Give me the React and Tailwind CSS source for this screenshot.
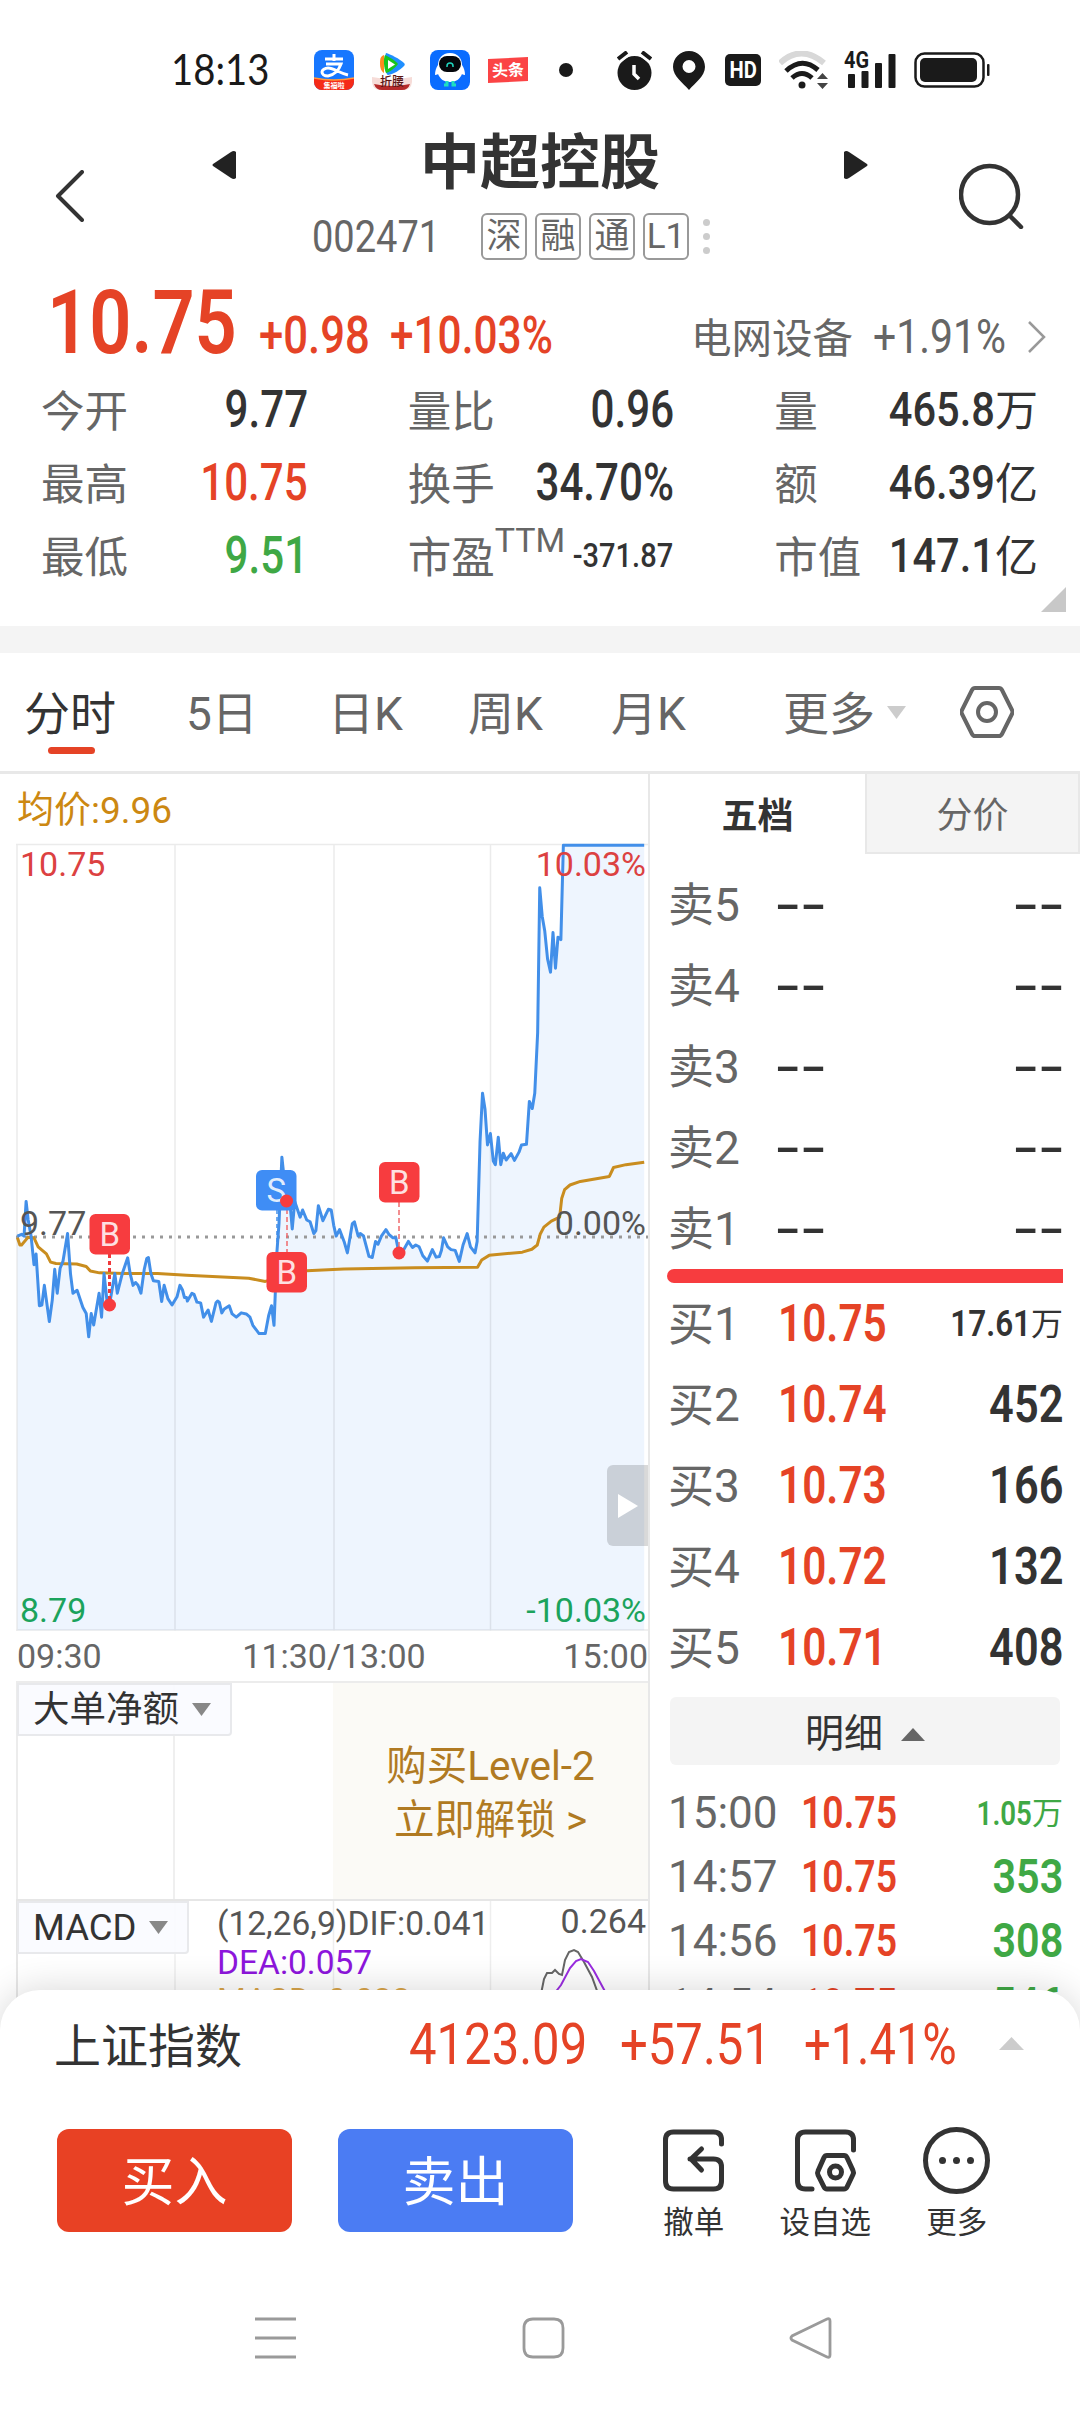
import React from 'react';
import clsx from 'clsx';

const RED = 'text-[#e54326]';
const GREEN = 'text-[#3fa845]';
const DARK = 'text-[#333]';

const quoteStats = [
  { label: '今开', value: '9.77', color: DARK },
  { label: '量比', value: '0.96', color: DARK },
  { label: '量', value: '465.8', unit: '万', color: DARK },
  { label: '最高', value: '10.75', color: RED },
  { label: '换手', value: '34.70%', color: DARK },
  { label: '额', value: '46.39', unit: '亿', color: DARK },
  { label: '最低', value: '9.51', color: GREEN },
  { label: '市盈', sup: 'TTM', value: '-371.87', color: DARK, small: true },
  { label: '市值', value: '147.1', unit: '亿', color: DARK },
];

const asks = ['卖5', '卖4', '卖3', '卖2', '卖1'];

const bids = [
  { label: '买1', price: '10.75', volume: '17.61', unit: '万' },
  { label: '买2', price: '10.74', volume: '452' },
  { label: '买3', price: '10.73', volume: '166' },
  { label: '买4', price: '10.72', volume: '132' },
  { label: '买5', price: '10.71', volume: '408' },
];

const trades = [
  { time: '15:00', price: '10.75', volume: '1.05', unit: '万' },
  { time: '14:57', price: '10.75', volume: '353' },
  { time: '14:56', price: '10.75', volume: '308' },
  { time: '14:54', price: '10.75', volume: '546' },
];

const PRICE_LINE =
  '42,1165 52,1160 58,1165 63,1068 68,1120 75,1165 82,1245 87,1215 95,1360 101,1358 107,1303 119,1404 126,1345 132,1258 138,1325 145,1255 152,1235 163,1158 170,1270 176,1325 186,1317 200,1365 208,1382 214,1447 220,1382 226,1414 239,1325 245,1392 251,1270 258,1345 264,1358 277,1270 283,1325 295,1270 308,1226 314,1270 321,1303 327,1295 333,1303 340,1325 348,1258 354,1228 358,1225 364,1270 370,1290 383,1292 390,1348 396,1303 405,1340 415,1358 427,1335 434,1303 440,1315 445,1337 450,1337 452,1347 463,1325 468,1328 475,1350 484,1352 491,1392 502,1372 510,1404 521,1352 525,1347 529,1350 535,1380 541,1369 553,1360 560,1383 570,1392 582,1380 594,1383 603,1392 610,1415 625,1438 640,1438 648,1388 655,1360 661,1415 668,1210 673,1130 680,944 686,1010 691,1067 700,1080 705,1145 711,1068 724,1112 730,1092 740,1120 748,1125 757,1158 762,1150 768,1080 779,1122 792,1090 799,1092 805,1135 811,1165 819,1147 830,1180 838,1212 850,1130 855,1125 864,1165 869,1158 877,1165 890,1222 898,1225 906,1180 912,1188 920,1165 931,1147 938,1160 948,1170 955,1170 962,1210 968,1215 985,1180 995,1197 1003,1190 1011,1195 1020,1220 1031,1235 1043,1203 1052,1224 1060,1222 1065,1205 1070,1170 1080,1195 1088,1203 1098,1205 1108,1236 1117,1190 1127,1158 1135,1195 1146,1212 1151,1180 1158,900 1164,765 1170,810 1176,910 1183,878 1190,955 1195,965 1202,888 1208,965 1214,933 1221,952 1233,934 1241,953 1252,930 1258,910 1270,908 1277,788 1284,808 1290,765 1297,595 1302,190 1308,270 1314,310 1321,390 1328,426 1334,315 1340,415 1346,328 1353,335 1359,71 1554,71';

const AVG_LINE =
  '42,1170 48,1190 52,1190 68,1168 82,1170 92,1195 112,1215 122,1238 135,1242 185,1243 208,1250 218,1263 240,1268 300,1270 380,1270 450,1275 600,1283 640,1292 690,1275 740,1262 830,1257 1000,1254 1152,1252 1162,1232 1180,1219 1260,1210 1283,1202 1296,1190 1303,1160 1312,1140 1330,1123 1350,1112 1355,1060 1362,1035 1375,1022 1400,1012 1470,998 1480,973 1510,965 1554,958';

const Triangle = ({ className, points = '0,0 10,0 5,10' }) => (
  <svg viewBox="0 0 10 10" preserveAspectRatio="none" className={className}>
    <polygon points={points} fill="currentColor" />
  </svg>
);

const StatusBar = () => (
  <div className="flex h-[132px] items-center pt-2 pl-[171px] text-[#1a1a1a]">
    <span className="w-[143px] origin-left scale-x-[.89] pb-1 text-[43px] leading-none font-['Lato','Roboto',sans-serif]">18:13</span>
    <svg width="40" height="40" viewBox="0 0 40 40">
      <clipPath id="pay"><rect width="40" height="40" rx="8" /></clipPath>
      <g clipPath="url(#pay)">
        <rect width="40" height="40" fill="#1777ff" />
        <path d="M20 4v7M11 9h18M12 14h15c-2 6-7 11-13 12-4 0-6-2-6-4s3-4 6-4c6 0 11 5 20 7" fill="none" stroke="#fff" strokeWidth="3" />
        <path d="M0 28Q20 32 40 28V40H0z" fill="#f52a18" />
        <path d="M0 28Q20 32 40 28" fill="none" stroke="#ff9a3c" strokeWidth="1.5" />
      </g>
      <text x="20" y="37.500" fontSize="7" fontWeight="700" fill="#fff" textAnchor="middle">集福啦</text>
    </svg>
    <svg width="40" height="40" viewBox="0 0 40 40" className="ml-[18px]">
      <path d="M12 5c-3 1-4 3-4 8s1 8 4 10z" fill="#ff8a1e" />
      <path d="M14 3c4 1 14 6 18 10 1 1 1 2 0 3-4 4-10 8-16 9-3 0-4-18-2-22z" fill="#1f8fff" />
      <path d="M13 5c4 2 10 5 13 9-3 4-8 8-12 9-2-4-3-14-1-18z" fill="#17c51c" />
      <path d="M16 10l7 4.500-7 4.500z" fill="#fff" />
      <path d="M0 27l20 3 20-3v5q-1 8-8 8H8q-7 0-8-8z" fill="#f6dcd8" />
      <path d="M2 34q18 4 36 0-2 6-8 6H10q-6 0-8-6z" fill="#b62a2a" />
      <text x="20" y="36" fontSize="12" fontWeight="500" fill="#5a1515" textAnchor="middle">折腰</text>
    </svg>
    <svg width="40" height="40" viewBox="0 0 40 40" className="ml-[18px]">
      <rect width="40" height="40" rx="8" fill="#0a6cff" />
      <path d="M20 3c8 0 12 6 12 12 2 3 3 6 3 10-2 0-3-1-3-1-2 5-6 8-12 8s-10-3-12-8c0 0-1 1-3 1 0-4 1-7 3-10C8 9 12 3 20 3z" fill="#fff" />
      <rect x="9" y="6" width="22" height="16" rx="8" fill="#05070c" />
      <path d="M17 17v-1a3 3 0 0 1 6 0v1" fill="none" stroke="#1fd6c0" strokeWidth="1.500" />
      <path d="M17 31v4h-3M23 31v4h3" fill="none" stroke="#1fe0c0" strokeWidth="3" />
    </svg>
    <svg width="40" height="26" viewBox="0 0 40 26" className="ml-[18px]">
      <path d="M0 2L40 0V24L0 26z" fill="#fb4445" />
      <text x="20" y="19" fontSize="16" fontWeight="700" fill="#fff" textAnchor="middle" transform="rotate(-3 20 13)">头条</text>
    </svg>
    <span className="ml-[31px] size-3.5 rounded-full bg-[#1a1a1a]" />
    <svg width="35" height="39" viewBox="0 0 35 39" className="ml-[44px]">
      <circle cx="17.500" cy="22" r="17" fill="currentColor" />
      <path d="M0 9.500l11-8.500M35 9.500l-11-8.500" stroke="#fff" strokeWidth="8" />
      <path d="M1 8l9-7M34 8l-9-7" stroke="currentColor" strokeWidth="4" />
      <path d="M17 14v9l5 5" fill="none" stroke="#fff" strokeWidth="3.500" />
    </svg>
    <svg width="32" height="39" viewBox="0 0 32 39" className="ml-[21px]">
      <path fillRule="evenodd" d="M16 0C7 0 0 7 0 16c0 9 10 16 16 23 6-7 16-14 16-23C32 7 25 0 16 0zm0 9a6.500 6.500 0 1 1 0 13 6.500 6.500 0 0 1 0-13z" fill="currentColor" />
    </svg>
    <span className="ml-5 flex h-8 w-9 items-center justify-center rounded-[5px] bg-[#1a1a1a]">
      <span className="scale-x-[.84] text-[24px] leading-none font-bold text-white">HD</span>
    </span>
    <svg width="50" height="39" viewBox="0 0 50 39" className="ml-[18px]">
      <path d="M1 12Q22-7 45 12" fill="none" stroke="#d8d8d8" strokeWidth="6" />
      <path d="M7 20Q23 5 39 19" fill="none" stroke="currentColor" strokeWidth="5" />
      <path d="M13 27q10-9 20 0" fill="none" stroke="currentColor" strokeWidth="5" />
      <circle cx="23" cy="34" r="3.500" fill="currentColor" />
      <path d="M38 28l5.500-6 5.500 6zM38 32l5.500 6 5.500-6z" fill="#444" />
    </svg>
    <svg width="52" height="39" viewBox="0 0 52 39" className="ml-[15px] overflow-visible">
      <text x="0" y="17" fontSize="23" fontWeight="700" textLength="25" lengthAdjust="spacingAndGlyphs" fill="currentColor">4G</text>
      <rect x="4" y="23" width="7" height="14" rx="1" fill="currentColor" />
      <rect x="17.500" y="20" width="7" height="17" rx="1" fill="currentColor" />
      <rect x="31" y="12" width="7" height="25" rx="1" fill="currentColor" />
      <rect x="44.500" y="3" width="7" height="34" rx="1" fill="currentColor" />
    </svg>
    <svg width="76" height="36" viewBox="0 0 76 36" className="ml-[18px]">
      <rect x="1.500" y="1.500" width="68" height="33" rx="9" fill="none" stroke="currentColor" strokeWidth="2.500" />
      <rect x="6" y="6" width="57" height="24" rx="5" fill="currentColor" />
      <rect x="73" y="12" width="2.500" height="12" rx="1" fill="currentColor" />
    </svg>
  </div>
);

const Header = () => (
  <div className="flex h-32 items-center pl-[55px]">
    <svg width="29" height="52" viewBox="0 0 29 52" fill="none" stroke="#333" strokeWidth="4">
      <path d="M27 2L3 26l24 24" strokeLinecap="round" strokeLinejoin="round" />
    </svg>
    <div className="ml-[128px] w-[656px]">
      <div className="flex h-[60px] items-center justify-between">
        <svg width="25" height="28" viewBox="0 0 25 28" className="mt-1.5 text-[#222]"><path d="M24 1v26q-2 2-5 0L1 15q-1-1 0-2L19 1q3-2 5 0z" fill="currentColor" /></svg>
        <h1 className="pt-1 text-[60px] leading-[60px] font-bold text-[#333]">中超控股</h1>
        <svg width="25" height="28" viewBox="0 0 25 28" className="mt-1.5 -scale-x-100 text-[#222]"><path d="M24 1v26q-2 2-5 0L1 15q-1-1 0-2L19 1q3-2 5 0z" fill="currentColor" /></svg>
      </div>
      <div className="mt-[21px] flex h-[47px] items-center gap-2 pl-[100px] text-[#666]">
        <span className="w-[161px] origin-left scale-x-[.845] text-[45px] leading-none">002471</span>
        {['深', '融', '通', 'L1'].map((tag) => (
          <span key={tag} className="flex h-[47px] w-[46px] items-center justify-center rounded-md border-2 border-[#999] text-[35px] leading-none">
            {tag}
          </span>
        ))}
        <span className="ml-1.5 flex flex-col gap-[7px]">
          <i className="size-[7px] rounded-full bg-[#ccc]" />
          <i className="size-[7px] rounded-full bg-[#ccc]" />
          <i className="size-[7px] rounded-full bg-[#ccc]" />
        </span>
      </div>
    </div>
    <svg width="66" height="66" viewBox="0 0 66 66" fill="none" stroke="#333" strokeWidth="4.500" className="ml-[91px]">
      <circle cx="30.500" cy="31.500" r="28.500" />
      <path d="M51 53l11 11" strokeLinecap="round" />
    </svg>
  </div>
);

const Stat = ({ item }) => (
  <div className="flex h-[73px] items-center justify-between whitespace-nowrap">
    <span className="relative -ml-px pt-1.5 text-[43.5px] leading-none text-[#666]">
      {item.label}
      {item.sup && <sup className="absolute top-[-8px] left-full text-[34px] leading-none">{item.sup}</sup>}
    </span>
    <span className={clsx('flex items-center leading-none font-medium', item.color)}>
      <span
        className={clsx(
          'origin-right',
          item.small
            ? 'translate-x-[2px] scale-x-[.88] text-[33px]'
            : item.unit
              ? 'scale-x-[.85] text-[49px]'
              : 'translate-x-[3px] scale-x-[.81] text-[52px]'
        )}
      >
        {item.value}
      </span>
      {item.unit && <span className="pt-1 text-[43px] font-normal">{item.unit}</span>}
    </span>
  </div>
);

const Quote = () => (
  <div className="relative h-[366px] pt-[18px]">
    <div className="flex h-[89px] items-baseline pl-[47px] leading-none whitespace-nowrap">
      <span className={clsx('w-[212px] origin-left scale-x-[.83] text-[89px] font-semibold', RED)}>10.75</span>
      <span className={clsx('w-[131px] origin-left scale-x-[.84] text-[52px] font-medium', RED)}>+0.98</span>
      <span className={clsx('w-[301px] origin-left scale-x-[.815] text-[52px] font-medium', RED)}>+10.03%</span>
      <span className="w-[182px] text-[40.5px] text-[#666]">电网设备</span>
      <span className="w-[155px] origin-left scale-x-[.835] text-[49px] text-[#666]">+1.91%</span>
      <svg width="18" height="32" viewBox="0 0 18 32" fill="none" stroke="#999" strokeWidth="2.500">
        <path d="M1 1l15 15L1 31" />
      </svg>
    </div>
    <div className="mt-[6px] grid grid-cols-3 gap-x-[104px] pr-[42px] pl-[42px]">
      {quoteStats.map((item) => <Stat key={item.label + item.value} item={item} />)}
    </div>
    <Triangle points="10,0 10,10 0,10" className="absolute right-[14px] bottom-[14px] size-[25px] text-[#c8c8c8]" />
  </div>
);

const PeriodTabs = () => (
  <div className="flex h-[121px] items-center border-b-3 border-[#e8e8e8] pl-[24px] text-[46px] leading-none whitespace-nowrap text-[#666]">
    <span className="relative w-[162px] pt-[3px] text-[#333]">
      分时
      <i className="absolute bottom-[-17px] left-6 h-[7px] w-[47px] rounded bg-[#e54326]" />
    </span>
    <span className="w-[142px] pt-[3px]">5日</span>
    <span className="w-[140px] pt-[3px]">日K</span>
    <span className="w-[143px] pt-[3px]">周K</span>
    <span className="w-[172px] pt-[3px]">月K</span>
    <span className="pt-[3px]">更多</span>
    <Triangle className="ml-3 h-[13px] w-[19px] text-[#ccc]" />
    <svg width="54" height="52" viewBox="0 0 54 52" fill="none" stroke="#666" strokeWidth="4" className="ml-[54px]">
      <path d="M15 2h24q2 0 3 2l10 20q1 2 0 4L42 48q-1 2-3 2H15q-2 0-3-2L2 28q-1-2 0-4L12 4q1-2 3-2z" />
      <circle cx="27" cy="26" r="9" />
    </svg>
  </div>
);

const Marker = ({ x, y, letter, fill }) => (
  <g>
    <rect x={x} y={y} width="40.500" height="40.500" rx="6" fill={fill} />
    <text x={x + 20.250} y={y + 32} fontSize="33" fill="#fff" fillOpacity=".85" textAnchor="middle">{letter}</text>
  </g>
);

const IntradayChart = () => (
  <div className="relative ml-4 h-[788px] text-[34px] leading-none">
    <svg width="632" height="788" viewBox="0 0 632 788" fill="none">
      <g transform="translate(-16,-23) scale(0.41454,0.35714)">
        <polygon points={`${PRICE_LINE} 1554,2269 42,2269`} fill="#eef5fe" />
      </g>
      <path d="M0 1.500h632M0 787h632M1 1v787M159 1v787M318 1v787M474.500 1v787" stroke="#000" strokeOpacity=".08" strokeWidth="1.500" />
      <path d="M0 394h632" stroke="#999" strokeWidth="3" strokeDasharray="3 6" />
      <g transform="translate(-16,-23) scale(0.41454,0.35714)" strokeLinejoin="round">
        <polyline points={AVG_LINE} stroke="#c98d1f" strokeWidth="3" vectorEffect="non-scaling-stroke" />
        <polyline points={PRICE_LINE} stroke="#428fe9" strokeWidth="3" vectorEffect="non-scaling-stroke" />
      </g>
      <path d="M93.500 411v50" stroke="#f0393c" strokeWidth="3" strokeDasharray="4 3" />
      <path d="M271 358v51M383 359v50" stroke="#f0696c" strokeWidth="1.500" strokeDasharray="5 3" />
      <path d="M261 367v42" stroke="#428fe9" strokeWidth="1.500" strokeDasharray="4 3" />
      <Marker x={73.5} y={371} letter="B" fill="#f73c3f" />
      <Marker x={240} y={327} letter="S" fill="#3f8df5" />
      <Marker x={250.5} y={409} letter="B" fill="#f73c3f" />
      <Marker x={363} y={319} letter="B" fill="#f73c3f" />
      <circle cx="93.500" cy="462" r="6.500" fill="#f73c3f" />
      <circle cx="270.500" cy="358" r="6.500" fill="#f73c3f" />
      <circle cx="383" cy="410" r="6.500" fill="#f73c3f" />
    </svg>
    <span className="absolute top-1 left-[4px] text-[#dc4141]">10.75</span>
    <span className="absolute top-1 right-[2px] text-[#dc4141]">10.03%</span>
    <span className="absolute top-[363px] left-[4px] text-[#555]">9.77</span>
    <span className="absolute top-[363px] right-[2px] text-[#555]">0.00%</span>
    <span className="absolute bottom-[4px] left-[4px] text-[#1ba35c]">8.79</span>
    <span className="absolute right-[2px] bottom-[4px] text-[#1ba35c]">-10.03%</span>
    <span className="absolute top-[622px] right-0 flex h-[81px] w-[41px] items-center justify-center rounded-l-md bg-black/15">
      <Triangle points="0,0 10,5 0,10" className="h-6 w-5 text-white" />
    </span>
  </div>
);

const IndicatorButton = ({ children, className }) => (
  <div className={clsx('flex h-[53px] items-center justify-between rounded-br border-2 border-[#e8e9ec] bg-[#f9fbff]/90 pr-[19px] pl-[14px] text-[36.5px] leading-none text-[#333]', className)}>
    <span className="pt-0.5">{children}</span>
    <Triangle className="h-[13px] w-[19px] text-[#888]" />
  </div>
);

const LeftPane = () => (
  <div className="w-[650px] border-r-2 border-[#e8e8e8]">
    <div className="flex h-[69px] items-center pt-[3px] pl-[17px] text-[37px] leading-none text-[#cc8812]">均价:9.96</div>
    <IntradayChart />
    <div className="flex h-[50px] items-center justify-between pl-[17px] text-[34px] leading-none text-[#666]">
      <span>09:30</span>
      <span className="mr-[-3px]">11:30/13:00</span>
      <span>15:00</span>
    </div>
    <div className="ml-4 flex h-[218px] border-t-2 border-l-2 border-[#ececec]">
      <div className="w-[157px] border-r-2 border-[#efefef]">
        <IndicatorButton className="-ml-px w-[215px]">大单净额</IndicatorButton>
      </div>
      <div className="ml-[158px] flex flex-1 flex-col items-center justify-center bg-[#fbfaf6] pt-1 text-[40.5px] leading-[54px] text-[#b07a22]">
        <span>购买Level-2</span>
        <span>立即解锁 &gt;</span>
      </div>
    </div>
    <div className="relative ml-4 flex h-[160px] border-t-2 border-l-2 border-[#e6e6e6] text-[33px] leading-none text-[#555]">
      <svg width="630" height="158" viewBox="0 0 630 158" fill="none" className="absolute top-0 left-0">
        <path d="M157 0v158M315.500 0v158M472.500 0v158" stroke="#eee" strokeWidth="1.500" />
        <path d="M523 93l3-15 3-6 5 0 3-3 4 4 3 1 3-15 4-8 5-2 4 2 6 10 8 15 8 22" stroke="#666" strokeWidth="2" />
        <path d="M536 93l7-9 9-17 6-7 5-2 7 3 6 9 14 26" stroke="#9a2ce0" strokeWidth="2" />
      </svg>
      <IndicatorButton className="relative -ml-px w-[172px]">MACD</IndicatorButton>
      <div className="relative ml-7 flex-1 pt-[4px] leading-[38.500px] whitespace-nowrap">
        <p className="text-[33.5px]">(12,26,9)DIF:0.041</p>
        <p className="text-[33.5px] text-[#8d16dc]">DEA:0.057</p>
        <p className="text-[#d9a54a]">MACD:-0.032</p>
      </div>
      <span className="relative pt-[3px] pr-[2px] text-[34px]">0.264</span>
    </div>
  </div>
);

const BookRow = ({ label, price, volume, unit }) => (
  <div className="flex h-[81px] items-center text-[46px] leading-none whitespace-nowrap">
    <span className="w-[110px] text-[#666]">{label}</span>
    {price ? (
      <>
        <span className={clsx('flex-1 origin-left scale-x-[.83] text-[51px] font-semibold', RED)}>{price}</span>
        <span className={clsx('origin-right translate-x-px scale-x-[.85] font-semibold text-[#333]', unit ? 'text-[37px]' : 'text-[51px]')}>{volume}</span>
        {unit && <span className="translate-x-px text-[32px] text-[#333]">{unit}</span>}
      </>
    ) : (
      <>
        <span className="flex-1 origin-left translate-x-[-3px] scale-x-[1.64] font-medium text-[#333]">--</span>
        <span className="origin-right translate-x-[2px] scale-x-[1.64] font-medium text-[#333]">--</span>
      </>
    )}
  </div>
);

const OrderBook = () => (
  <div className="w-[430px]">
    <div className="flex h-[80px] text-[36px] leading-none">
      <span className="flex w-[215px] items-center justify-center pt-1.5 font-bold text-[#333]">五档</span>
      <span className="flex flex-1 items-center justify-center border-2 border-t-0 border-[#e8e8e8] bg-[#f4f4f4] pt-1.5 text-[#666]">分价</span>
    </div>
    <div className="pt-[10px] pr-[18px] pl-[18px]">
      {asks.map((label) => <BookRow key={label} label={label} />)}
      <div className="-mr-px -ml-px h-[14px] rounded-l-full bg-[#f73c3f]" />
      {bids.map((row) => <BookRow key={row.label} {...row} />)}
    </div>
    <div className="mt-[9px] ml-5 flex h-[68px] w-[390px] items-center justify-center gap-[18px] rounded-md bg-[#f4f4f4] text-[39px] leading-none text-[#333]">
      <span className="pt-1.5">明细</span>
      <Triangle points="5,0 10,10 0,10" className="mt-1.5 h-[13px] w-6 text-[#666]" />
    </div>
    <div className="mt-[16px] pr-[18px] pl-[18px]">
      {trades.map((t) => (
        <div key={t.time} className="flex h-16 items-center text-[44px] leading-none whitespace-nowrap">
          <span className="w-[133px] text-[#666]">{t.time}</span>
          <span className={clsx('flex-1 origin-left scale-x-[.85] font-semibold', RED)}>{t.price}</span>
          <span className={clsx('origin-right translate-x-px font-semibold', GREEN, t.unit ? 'scale-x-[.84] text-[33px]' : 'scale-x-[.86] text-[48px]')}>{t.volume}</span>
          {t.unit && <span className={clsx('translate-x-px text-[31px]', GREEN)}>{t.unit}</span>}
        </div>
      ))}
    </div>
  </div>
);

const Action = ({ label, children }) => (
  <div className="flex w-[131.5px] flex-col items-center gap-[14px]">
    <svg width="67" height="67" viewBox="0 0 67 67" fill="none" stroke="#333" strokeWidth="5" strokeLinecap="round" strokeLinejoin="round">
      {children}
    </svg>
    <span className="text-[30.5px] leading-none text-[#333]">{label}</span>
  </div>
);

const BottomSheet = () => (
  <div className="relative -mt-10 h-[422px] rounded-t-[40px] bg-white shadow-[0_0_36px_rgba(0,0,0,0.16)]">
    <div className="flex h-[112px] items-center pl-[54px] leading-none whitespace-nowrap">
      <span className="w-[355px] text-[47px] text-[#333]">上证指数</span>
      <span className={clsx('w-[211px] origin-left scale-x-[.86] pb-1 text-[57px]', RED)}>4123.09</span>
      <span className={clsx('w-[184px] origin-left scale-x-[.86] pb-1 text-[57px]', RED)}>+57.51</span>
      <span className={clsx('w-[195px] origin-left scale-x-[.825] pb-1 text-[57px]', RED)}>+1.41%</span>
      <Triangle points="5,0 10,10 0,10" className="mb-1.5 h-[13px] w-[25px] text-[#ccc]" />
    </div>
    <div className="mt-[25px] flex pl-[57px]">
      <button className="mt-0.5 h-[103px] w-[235px] rounded-xl bg-[#e84124] pt-1.5 text-[53px] text-white">买入</button>
      <button className="mt-0.5 ml-[46px] h-[103px] w-[235px] rounded-xl bg-[#4b7cf3] pt-1.5 text-[53px] text-white">卖出</button>
      <div className="ml-[55px] flex">
        <Action label="撤单">
          <path d="M61.500 17v-4q0-8-8-8h-40q-8 0-8 8v41q0 8 8 8h40q8 0 8-8V40q0-8-8-8H30M41.500 22L31 32l10.500 11" />
        </Action>
        <Action label="设自选">
          <path d="M61.500 23V13q0-8-8-8h-40q-8 0-8 8v41q0 8 8 8H20" />
          <path d="M35 28.500h17q2 0 3 2l6 13q1 2 0 4L55 60q-1 2-3 2H35q-2 0-3-2l-6-12q-1-2 0-4l6-13.500q1-2 3-2z" />
          <circle cx="43.500" cy="45" r="6" />
        </Action>
        <Action label="更多">
          <circle cx="33.500" cy="33.500" r="31" />
          <path d="M19.500 33.500h.01M33.500 33.500h.01M47.500 33.500h.01" strokeWidth="7" />
        </Action>
      </div>
    </div>
    <div className="absolute top-[327px] left-[254px] flex w-[578px] justify-between">
      {[
        'M1 2h41M1 21h41M1 40h41',
        'M11 2h21q9 0 9 9v20q0 9-9 9H11q-9 0-9-9V11q0-9 9-9z',
        'M38 2q3-1 3 2v34q0 3-3 2L3 23q-2-2 0-4z',
      ].map((d) => (
        <svg key={d} width="43" height="42" viewBox="0 0 43 42" fill="none" stroke="#9a9a9a" strokeWidth="2.800">
          <path d={d} />
        </svg>
      ))}
    </div>
  </div>
);

const App = () => (
  <div className="h-[2412px] w-[1080px] overflow-hidden bg-white font-['Roboto','Noto_Sans_CJK_SC',sans-serif]">
    <StatusBar />
    <Header />
    <Quote />
    <div className="h-[27px] bg-[#f4f4f4]" />
    <PeriodTabs />
    <div className="flex h-[1256px] overflow-hidden">
      <LeftPane />
      <OrderBook />
    </div>
    <BottomSheet />
  </div>
);

export default App;
